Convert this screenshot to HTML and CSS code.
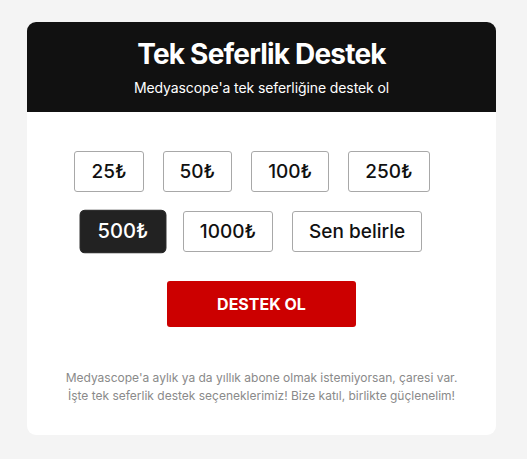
FILE: index.html
```html
<!DOCTYPE html>
<html lang="tr">
<head>
<meta charset="utf-8">
<link rel="stylesheet" href="styles.css">
</head>
<body>
<div class="card">
  <header class="card-head">
    <h1 class="title">Tek Seferlik Destek</h1>
    <p class="subtitle">Medyascope'a tek seferliğine destek ol</p>
  </header>
  <div class="card-body">
    <div class="options">
      <button class="opt">25₺</button>
      <button class="opt">50₺</button>
      <button class="opt">100₺</button>
      <button class="opt">250₺</button>
      <button class="opt selected">500₺</button>
      <button class="opt">1000₺</button>
      <button class="opt">Sen belirle</button>
    </div>
    <div class="cta-wrap">
      <button class="cta">DESTEK OL</button>
    </div>
  </div>
  <footer class="card-foot">
    <p class="note">Medyascope'a aylık ya da yıllık abone olmak istemiyorsan, çaresi var.<br>İşte tek seferlik destek seçeneklerimiz! Bize katıl, birlikte güçlenelim!</p>
  </footer>
</div>
</body>
</html>
```

FILE: styles.css
```css
* { box-sizing: border-box; }
html, body { margin: 0; padding: 0; }
body {
  background: #f4f4f4;
  font-family: Inter, "Noto Sans", sans-serif;
  padding: 22px 31px 0 27px;
}
.card {
  width: 469px;
  background: #fff;
  border-radius: 9px;
  overflow: hidden;
}
.card-head {
  background: #111111;
  height: 90px;
  text-align: center;
  color: #fff;
  padding-top: 16px;
}
.title {
  margin: 0;
  font-size: 28px;
  line-height: 32px;
  font-weight: 700;
  letter-spacing: -0.8px;
}
.subtitle {
  margin: 9px 0 0;
  font-size: 14px;
  line-height: 17px;
  font-weight: 400;
  letter-spacing: -0.1px;
}
.card-body {
  padding: 39px 0 0;
}
.options {
  display: flex;
  flex-wrap: wrap;
  justify-content: center;
  column-gap: 19px;
  row-gap: 19px;
  padding: 0 38px 0 19px;
}
.opt {
  height: 41px;
  padding: 0 16px;
  background: #fff;
  border: 1px solid #a8a8a8;
  border-radius: 3px;
  font-family: Inter, "Noto Sans", sans-serif;
  font-size: 19px;
  font-weight: 500;
  color: #111;
}
.opt.selected {
  background: #222222;
  border-color: #222222;
  color: #fff;
  border-radius: 5px;
  transform: scale(1.06);
}
.cta-wrap {
  display: flex;
  justify-content: center;
  padding-top: 29px;
}
.cta {
  width: 189px;
  height: 46px;
  background: #cc0000;
  border: none;
  border-radius: 3px;
  color: #fff;
  font-family: Inter, "Noto Sans", sans-serif;
  font-size: 16px;
  font-weight: 700;
}
.card-foot {
  padding: 42px 0 30px;
  text-align: center;
}
.note {
  margin: 0;
  font-size: 12px;
  line-height: 18px;
  color: #8a8a8a;
}
```
